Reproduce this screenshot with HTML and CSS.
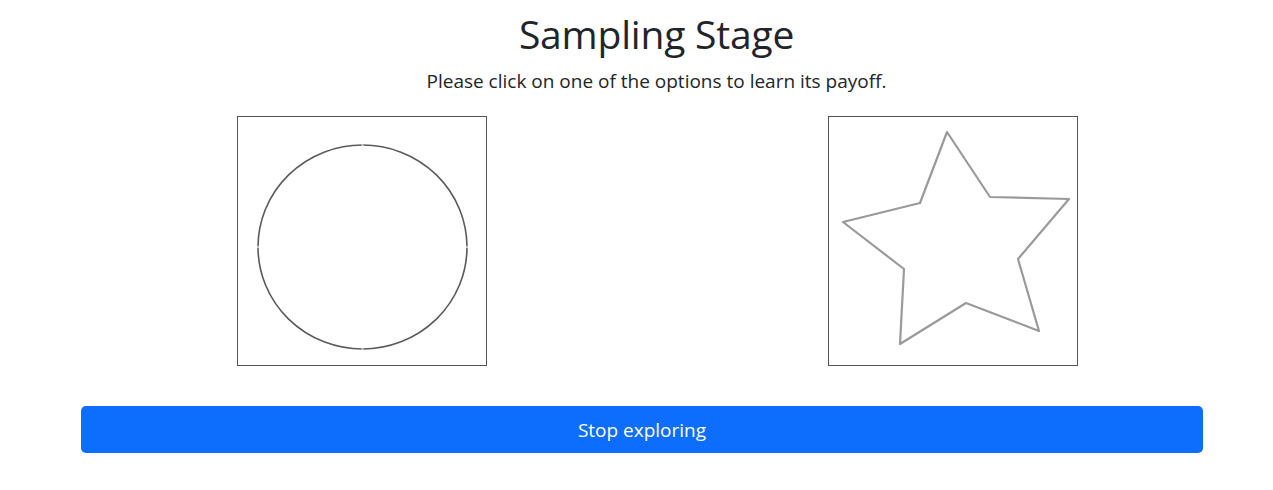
FILE: index.html
```html
<!DOCTYPE html>
<html lang="en">
<head>
<meta charset="utf-8">
<title>Sampling Stage</title>
<link rel="stylesheet" href="styles.css">
</head>
<body>
<main class="page">
  <header class="intro">
    <h1 class="title">Sampling Stage</h1>
    <p class="lead">Please click on one of the options to learn its payoff.</p>
  </header>
  <section class="options">
    <div class="col">
      <button class="option" type="button" aria-label="Circle option">
        <svg width="248" height="248" viewBox="0 0 248 248">
          <ellipse cx="124.5" cy="130" rx="104.5" ry="102" fill="none" stroke="#5a5a5a" stroke-width="1.6"/>
          <g fill="#c8c8c8">
            <circle cx="124.5" cy="28" r="1.2"/>
            <circle cx="124.5" cy="232" r="1.2"/>
            <circle cx="20" cy="130" r="1.2"/>
            <circle cx="229" cy="130" r="1.2"/>
          </g>
        </svg>
      </button>
    </div>
    <div class="col">
      <button class="option" type="button" aria-label="Star option">
        <svg width="248" height="248" viewBox="0 0 248 248">
          <polygon points="118,15 161,80 240,82 189,142 210,214 137,186 71,227 75,152 14,105 91,86" fill="none" stroke="#9a9a9a" stroke-width="2.2" stroke-linejoin="round"/>
        </svg>
      </button>
    </div>
  </section>
  <div class="actions">
    <button class="btn-stop" type="button">Stop exploring</button>
  </div>
</main>
</body>
</html>
```
FILE: styles.css
```css
html, body {
  margin: 0;
  padding: 0;
  background: #ffffff;
}

body {
  font-family: "Open Sans", "Noto Sans", "Liberation Sans", sans-serif;
  color: #212529;
}

.page {
  width: 1273px;
}

.intro {
  display: flex;
  flex-direction: column;
  align-items: center;
  padding-left: 40px;
}

.title {
  margin: 11px 0 0;
  font-size: 39px;
  font-weight: 400;
  line-height: 46px;
  letter-spacing: -0.2px;
}

.lead {
  margin: 11px 0 0;
  font-size: 19px;
  line-height: 26px;
}

.options {
  display: grid;
  grid-template-columns: 591px 591px;
  margin: 22px 0 0 66px;
}

.col {
  display: flex;
  justify-content: center;
}

.option {
  display: block;
  width: 250px;
  height: 250px;
  padding: 0;
  margin: 0;
  border: 1px solid #555555;
  background: #ffffff;
  cursor: pointer;
}

.option svg {
  display: block;
}

.actions {
  padding: 40px 0 0 81px;
}

.btn-stop {
  display: block;
  width: 1122px;
  height: 47px;
  border: none;
  border-radius: 5px;
  background: #0d6efd;
  color: #ffffff;
  font-family: inherit;
  font-size: 19px;
  cursor: pointer;
}
```
